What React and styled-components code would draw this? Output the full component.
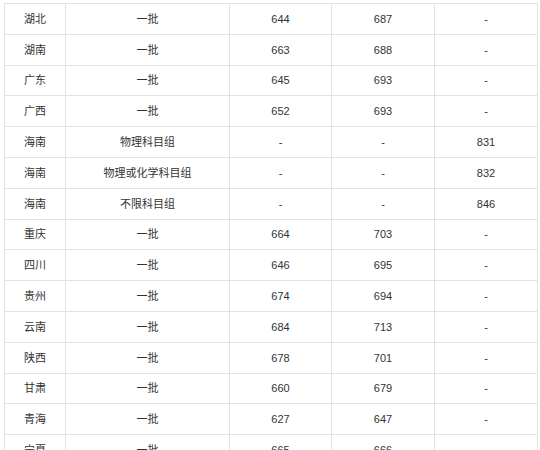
import { createGlobalStyle, styled } from "styled-components";

const GlobalStyle = createGlobalStyle`
  html, body {
    margin: 0;
    padding: 0;
    background: #fff;
  }
  body {
    font-family: "Liberation Sans", "Noto Sans CJK SC", sans-serif;
    color: #333;
  }
`;

const ROWS = [
  ["湖北", "一批", "644", "687", "-"],
  ["湖南", "一批", "663", "688", "-"],
  ["广东", "一批", "645", "693", "-"],
  ["广西", "一批", "652", "693", "-"],
  ["海南", "物理科目组", "-", "-", "831"],
  ["海南", "物理或化学科目组", "-", "-", "832"],
  ["海南", "不限科目组", "-", "-", "846"],
  ["重庆", "一批", "664", "703", "-"],
  ["四川", "一批", "646", "695", "-"],
  ["贵州", "一批", "674", "694", "-"],
  ["云南", "一批", "684", "713", "-"],
  ["陕西", "一批", "678", "701", "-"],
  ["甘肃", "一批", "660", "679", "-"],
  ["青海", "一批", "627", "647", "-"],
  ["宁夏", "一批", "665", "666", "-"],
];

const COLS = [61, 164, 102, 103, 103];

const Page = styled.div`
  padding: 3px 0 0 4px;
  height: 450px;
  overflow: hidden;
  box-sizing: border-box;
`;

const Table = styled.table`
  border-collapse: collapse;
  table-layout: fixed;
  width: 533px;
`;

const Row = styled.tr`
  height: 30.8px;
`;

const Cell = styled.td`
  border: 1px solid #e2e2e2;
  padding: 0;
  text-align: center;
  vertical-align: middle;
  font-size: 11px;
  line-height: 16px;
  color: #333;
`;

export default function App() {
  return (
    <>
      <GlobalStyle />
      <Page>
        <Table>
          <colgroup>
            {COLS.map((w, i) => (
              <col key={i} style={{ width: w }} />
            ))}
          </colgroup>
          <tbody>
            {ROWS.map((r, i) => (
              <Row key={i}>
                {r.map((c, j) => (
                  <Cell key={j}>{c}</Cell>
                ))}
              </Row>
            ))}
          </tbody>
        </Table>
      </Page>
    </>
  );
}
